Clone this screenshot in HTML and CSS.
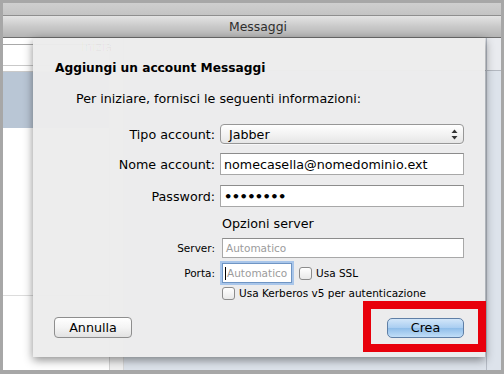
FILE: index.html
```html
<!DOCTYPE html>
<html lang="it">
<head>
    <meta charset="UTF-8">
    <meta name="viewport" content="width=device-width, initial-scale=1.0">
    <title>Messaggi</title>
    <link rel="stylesheet" href="styles.css">
</head>
<body>
    <div class="screen">
        <div class="topband"></div>
        <div class="titlebar">Messaggi</div>

        <div class="window">
            <aside class="sidebar">
                <div class="side-head"></div>
                <div class="side-row"></div>
                <div class="side-sep"></div>
                <div class="side-row selected"></div>
                <div class="side-fill"></div>
                <div class="side-row last"></div>
            </aside>
            <div class="gutter"></div>
            <div class="pane">
                <div class="pane-main">
                    <div class="pane-head"></div>
                </div>
                <div class="scroll">
                    <div class="pane-head"></div>
                </div>
            </div>

            <!-- foglio sopra la finestra -->
            <div class="sheet">
                <div class="ghost">Inizia</div>
                <h1 class="sheet-title">Aggiungi un account Messaggi</h1>
                <p class="intro">Per iniziare, fornisci le seguenti informazioni:</p>

                <div class="form">
                    <div class="row row-tipo">
                        <label class="label">Tipo account:</label>
                        <div class="select">
                            <span>Jabber</span>
                            <svg class="arrows" width="7" height="11" viewBox="0 0 7 11">
                                <path d="M3.5 0.5 L6.5 4 L0.5 4 Z" fill="#333"/>
                                <path d="M3.5 10.5 L6.5 7 L0.5 7 Z" fill="#333"/>
                            </svg>
                        </div>
                    </div>
                    <div class="row row-nome">
                        <label class="label">Nome account:</label>
                        <div class="input">nomecasella@nomedominio.ext</div>
                    </div>
                    <div class="row row-pass">
                        <label class="label">Password:</label>
                        <div class="input dots">••••••••</div>
                    </div>
                    <div class="row row-opz">
                        <span class="label"></span>
                        <span class="section">Opzioni server</span>
                    </div>
                    <div class="row row-server small">
                        <label class="label">Server:</label>
                        <div class="input placeholder">Automatico</div>
                    </div>
                    <div class="row row-porta small">
                        <label class="label">Porta:</label>
                        <div class="port">
                            <div class="input placeholder focus"><span class="caret"></span>Automatico</div>
                            <span class="check"><span class="box"></span>Usa SSL</span>
                        </div>
                    </div>
                    <div class="row row-kerb small">
                        <span class="label"></span>
                        <span class="check"><span class="box"></span>Usa Kerberos v5 per autenticazione</span>
                    </div>
                </div>

                <div class="buttons">
                    <button class="btn">Annulla</button>
                    <button class="btn primary">Crea</button>
                </div>
            </div>

            <div class="highlight"></div>
        </div>
    </div>
</body>
</html>
```

FILE: styles.css
```css
* {
    margin: 0;
    padding: 0;
    box-sizing: border-box;
}

body {
    font-family: 'DejaVu Sans', 'Liberation Sans', sans-serif;
    background: #a7a7a7;
    color: #000;
}

.screen {
    width: 504px;
    height: 374px;
    padding: 3px 3px 4px 3px;
    background: #a7a7a7;
    display: flex;
    flex-direction: column;
    overflow: hidden;
}

.topband {
    height: 13px;
    background: linear-gradient(#cfcfcf, #c4c4c4);
    border-bottom: 1px solid #8f8f8f;
}

.titlebar {
    height: 22px;
    padding-left: 12px;
    background: linear-gradient(#e4e4e4, #c9c9c9 50%, #b4b4b4);
    border-bottom: 1px solid #6e6e6e;
    text-align: center;
    font-size: 12.4px;
    line-height: 21px;
    color: #2e2e2e;
}

.window {
    position: relative;
    flex: 1;
    display: flex;
}

/* colonna sinistra */
.sidebar {
    width: 107px;
    background: #fff;
    border-right: 1px solid #d4d4d4;
    display: flex;
    flex-direction: column;
}

.side-head {
    height: 7px;
    border-bottom: 1px solid #a9a9a9;
}

.side-row {
    height: 21px;
    border-bottom: 1px solid #c9c9c9;
}

.side-sep {
    height: 6px;
    border-bottom: 1px solid #c9c9c9;
}

.side-row.selected {
    height: 56px;
    background: #b9c6d5;
    border-bottom: none;
}

.side-fill {
    flex: 1;
    border-bottom: 1px solid #dcdcdc;
}

.side-row.last {
    height: 74px;
    border-bottom: none;
}

.gutter {
    width: 14px;
    background: #f1f1f1;
    border-right: 1px solid #d9d9d9;
}

.pane {
    flex: 1;
    display: flex;
    background: #dde3eb;
}

.pane-main {
    flex: 1;
}

.scroll {
    width: 15px;
    border-left: 1px solid #b6bcc6;
}

.pane-head {
    height: 33px;
    background: #e9ebef;
    border-bottom: 1px solid #b3b8c0;
}

/* foglio */
.sheet {
    position: absolute;
    left: 30px;
    top: 0;
    width: 452px;
    height: 319px;
    background: rgba(236, 236, 236, 0.97);
    box-shadow: 0 3px 9px rgba(0, 0, 0, 0.45);
    padding: 22px 21px 0 21px;
}

.ghost {
    position: absolute;
    left: 48px;
    top: 2px;
    font-size: 12px;
    color: rgba(0, 0, 0, 0.035);
}

.sheet-title {
    font-size: 12.2px;
    font-weight: bold;
    line-height: 16px;
    padding-left: 1px;
}

.intro {
    font-size: 12.7px;
    line-height: 16px;
    margin-top: 15px;
    padding-left: 22px;
}

.form {
    margin-top: 17px;
    display: flex;
    flex-direction: column;
}

.row {
    display: grid;
    grid-template-columns: 166px 244px;
    align-items: center;
    font-size: 12.7px;
}

.row.small {
    font-size: 10.5px;
}

.label {
    text-align: right;
    padding-right: 5px;
}

.row-tipo { height: 20px; }
.row-nome { height: 22px; margin-top: 9px; }
.row-pass { height: 22px; margin-top: 10px; }
.row-opz { height: 16px; margin-top: 8px; }
.row-server { height: 20px; margin-top: 7px; }
.row-porta { height: 20px; margin-top: 5px; }
.row-kerb { height: 16px; margin-top: 2px; }

.select {
    height: 20px;
    border: 1px solid #979797;
    border-radius: 4px;
    background: linear-gradient(#ffffff, #f3f3f3 50%, #e6e6e6);
    box-shadow: 0 1px 0 rgba(255, 255, 255, 0.6);
    display: flex;
    align-items: center;
    justify-content: space-between;
    padding: 0 5px 0 8px;
}

.input {
    height: 100%;
    background: #fff;
    border: 1px solid #a8a8a8;
    border-top-color: #8c8c8c;
    padding-left: 3px;
    display: flex;
    align-items: center;
}

.placeholder {
    color: #9c9c9c;
}

.row-server .input,
.row-porta .input {
    margin-left: 2px;
}

.dots {
    font-size: 13px;
    font-weight: bold;
    letter-spacing: -0.6px;
}

.section {
    padding-left: 2px;
}

.port {
    display: flex;
    align-items: center;
    height: 20px;
}

.input.focus {
    width: 70px;
    flex: none;
    border: 1px solid #6f95c4;
    box-shadow: 0 0 0 2px #a9c6ea;
    padding-left: 2px;
}

.caret {
    width: 1px;
    height: 13px;
    background: #000;
    margin-right: 1px;
}

.check {
    display: flex;
    align-items: center;
    gap: 4px;
}

.port .check {
    margin-left: 7px;
}

.row-kerb .check {
    padding-left: 2px;
}

.box {
    width: 13px;
    height: 13px;
    border: 1px solid #8c8c8c;
    border-radius: 3px;
    background: linear-gradient(#ffffff, #e9e9e9);
}

.buttons {
    display: flex;
    justify-content: space-between;
    align-items: center;
    margin-top: 16px;
}

.btn {
    width: 78px;
    height: 21px;
    font-family: inherit;
    font-size: 12.7px;
    border: 1px solid #8e8e8e;
    border-radius: 4px;
    background: linear-gradient(#ffffff, #f4f4f4 50%, #e2e2e2);
    color: #000;
}

.btn.primary {
    width: 77px;
    height: 20px;
    border-color: #5f7fa6;
    border-radius: 5px;
    background: linear-gradient(#d2e6f9, #a9cdf1 50%, #8fbde9 51%, #c1def8);
}

/* riquadro rosso di evidenziazione */
.highlight {
    position: absolute;
    left: 360px;
    top: 263px;
    width: 123px;
    height: 51px;
    border: 8px solid #e8000b;
}
```
